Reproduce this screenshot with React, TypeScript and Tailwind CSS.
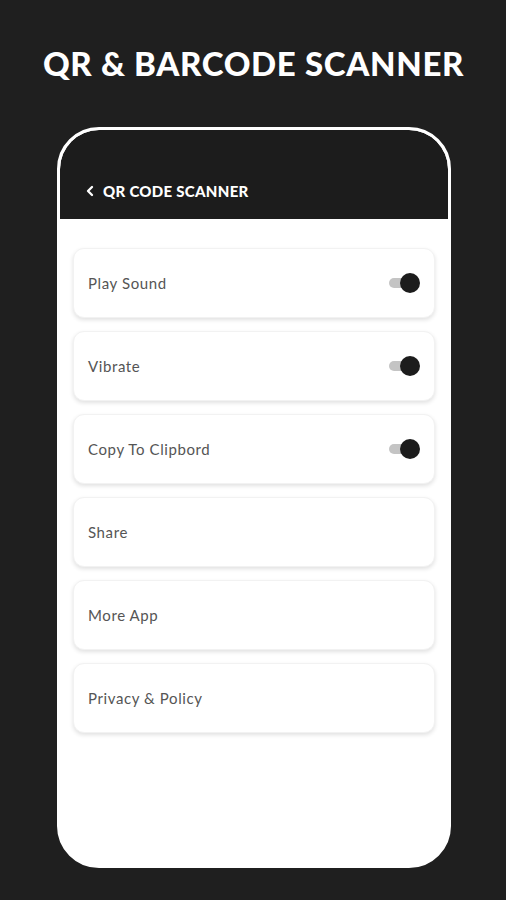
import { ChevronLeft } from 'lucide-react'

type Row = { label: string; toggle?: boolean }

const rows: Row[] = [
  { label: 'Play Sound', toggle: true },
  { label: 'Vibrate', toggle: true },
  { label: 'Copy To Clipbord', toggle: true },
  { label: 'Share' },
  { label: 'More App' },
  { label: 'Privacy & Policy' },
]

function Toggle() {
  return (
    <div className="relative w-[32px] h-[20px] flex items-center">
      <div className="ml-[5px] w-[24px] h-[10px] rounded-full bg-[#c4c4c4]" />
      <div className="absolute right-[-4px] top-0 w-[20px] h-[20px] rounded-full bg-[#1c1c1c]" />
    </div>
  )
}

export default function App() {
  return (
    <div
      className="w-[506px] h-[900px] bg-[#1f1f1f] flex flex-col items-center overflow-hidden"
      style={{ fontFamily: 'Lato, "Open Sans", sans-serif' }}
    >
      <h1 className="mt-[43px] ml-[1px] text-white text-[33px] leading-[40px] font-black tracking-[0.02em]">
        QR &amp; BARCODE SCANNER
      </h1>

      <div className="mt-[44px] ml-[2px] w-[394px] h-[741px] rounded-[42px] border-[3px] border-white bg-white overflow-hidden flex flex-col">
        <div className="h-[89px] bg-[#1c1c1c] rounded-t-[39px] flex items-end pb-[17px] pl-[22px] gap-[5px]">
          <ChevronLeft className="w-[16px] h-[16px] text-white mb-[3px]" strokeWidth={3.5} />
          <span className="text-white text-[15px] font-black tracking-[0.02em] leading-[22px]">
            QR CODE SCANNER
          </span>
        </div>

        <div className="flex flex-col gap-[13px] pt-[29px] px-[13px]">
          {rows.map((r) => (
            <div
              key={r.label}
              className="h-[70px] rounded-[11px] bg-white border border-[#f2f2f2] shadow-[0_2px_4px_rgba(0,0,0,0.12)] flex items-center justify-between pl-[14px] pr-[18px]"
            >
              <span className="text-[15px] text-[#555555] tracking-[0.04em]">{r.label}</span>
              {r.toggle && <Toggle />}
            </div>
          ))}
        </div>
      </div>
    </div>
  )
}
